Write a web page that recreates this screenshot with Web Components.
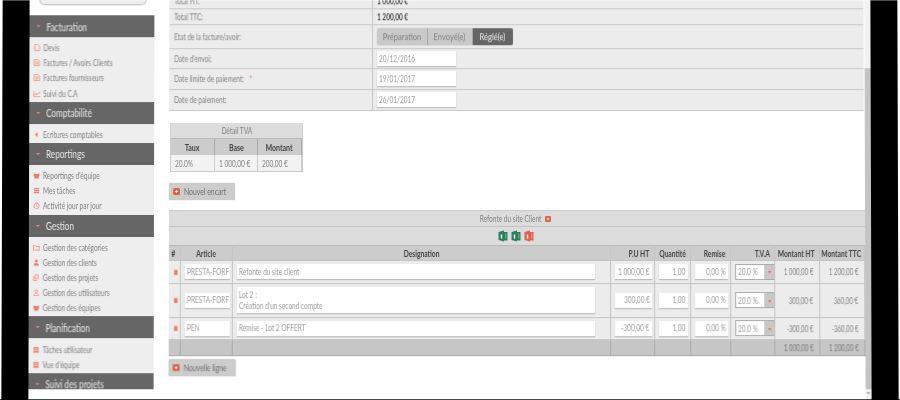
<!DOCTYPE html>
<html lang="fr"><head><meta charset="utf-8"><title>Facture</title>
<style>
html,body{margin:0;padding:0;width:900px;height:400px;overflow:hidden;background:#fff}
body{font-family:Lato,"Open Sans","Liberation Sans",sans-serif;font-size:8.800px;color:#808080}
</style></head><body>
<app-frame>
  <side-bar slot="side">
    <side-section label="Facturation">
      <side-item icon="doc">Devis</side-item>
      <side-item icon="file">Factures / Avoirs Clients</side-item>
      <side-item icon="file">Factures fournisseurs</side-item>
      <side-item icon="chart">Suivi du C.A</side-item>
    </side-section>
    <side-section label="Comptabilité">
      <side-item icon="back">Ecritures comptables</side-item>
    </side-section>
    <side-section label="Reportings">
      <side-item icon="team">Reportings d'équipe</side-item>
      <side-item icon="list">Mes tâches</side-item>
      <side-item icon="clock">Activité jour par jour</side-item>
    </side-section>
    <side-section label="Gestion">
      <side-item icon="folder">Gestion des catégories</side-item>
      <side-item icon="user">Gestion des clients</side-item>
      <side-item icon="copy">Gestion des projets</side-item>
      <side-item icon="userline">Gestion des utilisateurs</side-item>
      <side-item icon="team">Gestion des équipes</side-item>
    </side-section>
    <side-section label="Planification">
      <side-item icon="cal">Tâches utilisateur</side-item>
      <side-item icon="cal">Vue d'équipe</side-item>
    </side-section>
    <side-section label="Suivi des projets"></side-section>
  </side-bar>
  <invoice-form></invoice-form>
  <tva-table></tva-table>
  <add-button style="margin:11px 0 0 .5px;width:66px">Nouvel encart</add-button>
  <lines-table></lines-table>
  <add-button style="margin:3px 0 0 0;width:67px">Nouvelle ligne</add-button>
</app-frame>
<script>
const T=`.t{display:inline-block;white-space:nowrap;transform:scaleX(var(--sx,.74));transform-origin:left center}
.t.m{transform-origin:center}.t.e{transform-origin:right center}.t.p{white-space:pre-line}`;
const t=(s,c='')=>`<span class="t ${c}">${s}</span>`;
const ICONS={
 doc:'<path d="M1.500.5h3.500l2 2v5h-5.500z" fill="none" stroke="currentColor" stroke-width=".8"/>',
 file:'<path d="M1 .5h4l2 2v5H1z" fill="none" stroke="currentColor" stroke-width=".8"/><path d="M2.500 3.500h3M2.500 5.500h3" stroke="currentColor" stroke-width=".9"/>',
 chart:'<path d="M.5 1v6.500H8" fill="none" stroke="currentColor" stroke-width=".7"/><path d="M1 6l2-2 1.500 1L8 2" fill="none" stroke="currentColor"/>',
 back:'<path d="M5 1L2 4l3 3z" fill="currentColor"/>',
 team:'<path d="M1 1.500l1.500.8h3L7 1.500 7.500 4 6.500 5v2.500h-5V5L.5 4z" fill="currentColor"/>',
 list:'<path d="M1 1h6v1.500H1zM1 3.300h6v1.500H1zM1 5.600h6V7H1z" fill="currentColor"/>',
 clock:'<circle cx="4" cy="4.500" r="3" fill="none" stroke="currentColor" stroke-width=".8"/><path d="M4 3v1.700h1.500M3 .6h2" stroke="currentColor" stroke-width=".7" fill="none"/>',
 folder:'<path d="M.5 2h2.500l.7.800h3.800v4.200H.5z" fill="none" stroke="currentColor" stroke-width=".8"/>',
 user:'<circle cx="4" cy="2.200" r="1.700" fill="currentColor"/><path d="M1 7.500c0-4 6-4 6 0z" fill="currentColor"/>',
 copy:'<path d="M2.500 1H6v4.500H2.500zM1 2.500v5h4" fill="none" stroke="currentColor" stroke-width=".8"/>',
 userline:'<circle cx="4" cy="2.400" r="1.600" fill="none" stroke="currentColor" stroke-width=".7"/><path d="M1.300 7.500c0-3.500 5.400-3.500 5.400 0z" fill="none" stroke="currentColor" stroke-width=".7"/>',
 cal:'<path d="M1 1.200h6v6.300H1z" fill="currentColor"/><path d="M1.700 3.200h4.600M1.700 5h4.600" stroke="#fff" stroke-width=".7"/>',
 trash:'<path d="M2 2h4v5.500H2zM1.500 1.200h5" fill="currentColor" stroke="currentColor" stroke-width=".6"/>'
};
const svgIcon=(n,s=8)=>`<svg width="${s}" height="${s}" viewBox="0 0 8 8" aria-hidden="true">${ICONS[n]}</svg>`;
function define(name,css,html){
  customElements.define(name,class extends HTMLElement{
    connectedCallback(){
      if(this.shadowRoot)return;
      this.attachShadow({mode:'open'}).innerHTML=`<style>${T}${css}</style>`+(typeof html==='function'?html(this):html);
    }
  });
}
define('app-frame',`
:host{display:block;width:900px;height:400px;background:#fff;transform:perspective(1000px) rotateX(.42deg);filter:blur(.48px)}
.frame{box-sizing:border-box;height:398.500px;margin:0 2px;background:#fff;border:solid #000;border-width:0 27px;display:flex;overflow:hidden}
.side{width:125px;flex:none}
main{width:696px;flex:none;margin-left:14.500px;display:flex;flex-direction:column;align-items:flex-start}
.bar{width:6.500px;margin-left:.500px;flex:none;background:#f1f1f1;display:flex;flex-direction:column;padding-top:68px}
.thumb{height:321px;background:#c4c4c4;flex:none}
.arrow{margin:3px auto 0;width:0;height:0;border:2px solid transparent;border-top-color:#999}
.foot{height:1.500px;background:#000}`,
`<div class="frame"><div class="side"><slot name="side"></slot></div><main><slot></slot></main><div class="bar"><div class="thumb"></div><div class="arrow"></div></div></div><div class="foot"></div>`);
define('side-bar',`
:host{display:block;height:389px;overflow:hidden}
.top{box-sizing:border-box;height:4.500px;margin:0 8px 10.500px 10px;background:#eee;border:1px solid #bbb;border-top:0;border-radius:0 0 8px 8px}
.list{background:#eeeeee}`,
`<div class="top"></div><div class="list"><slot></slot></div>`);
define('side-section',`
:host{display:block}
header{height:22px;box-sizing:border-box;background:#666;color:#e8e8e8;font-size:12px;display:flex;align-items:center;padding-left:7px;gap:6px;white-space:nowrap;--sx:.68}
header i{width:0;height:0;border:2px solid transparent;border-top-color:#ec8a75;margin-top:2px}
.b{padding:3px 0 1px}`,
h=>`<header><i></i>${t(h.getAttribute('label'))}</header><div class="b"><slot></slot></div>`);
define('side-item',`
:host{display:flex;align-items:center;height:15.200px;padding-left:4px;font-size:8.800px;color:#808080;white-space:nowrap}
.i{display:flex;color:#ee7b63;margin-right:3px}`,
h=>`<span class="i">${svgIcon(h.getAttribute('icon'),7)}</span><span class="t"><slot></slot></span>`);
define('invoice-form',`
:host{display:block;width:695px;margin:-7px 0 0 .500px;background:#ececec;color:#808080;font-size:8.800px;flex:none}
.r{display:grid;grid-template-columns:203px 1fr;box-sizing:border-box;border-bottom:1px solid #c8c8c8}
.r>div{display:flex;align-items:center;padding-left:5px;white-space:nowrap}
.r>div+div{border-left:1px solid #c4c4c4;padding-left:4px}
b{color:#444;font-weight:700}
u{color:#e8705a;text-decoration:none;margin-left:5px}
.inp{box-sizing:border-box;width:79px;height:15px;background:#fff;box-shadow:0 1px 1px #bbb;padding-left:2px;display:flex;align-items:center;color:#999}
.seg{display:flex;height:17px;font-size:10.200px;border-radius:2px;overflow:hidden;box-shadow:0 0 1px #888}
.seg>span{background:#c9c9c9;display:flex;align-items:center;justify-content:center;border-right:1px solid #aaa;box-sizing:border-box}
.seg .on{background:#666;color:#eee;border:0}`,
`<div class="r" style="height:16px"><div>${t('Total HT:')}</div><div>${t('<b>1 000,00 €</b>')}</div></div>
<div class="r" style="height:15.500px"><div>${t('Total TTC:')}</div><div>${t('<b>1 200,00 €</b>')}</div></div>
<div class="r" style="height:24px"><div>${t('Etat de la facture/avoir:')}</div><div><div class="seg"><span style="width:51px">${t('Préparation','m')}</span><span style="width:44.500px">${t('Envoyé(e)','m')}</span><span class="on" style="width:40.500px">${t('Réglé(e)','m')}</span></div></div></div>
<div class="r" style="height:20.500px"><div>${t("Date d'envoi:")}</div><div><div class="inp">${t('20/12/2016')}</div></div></div>
<div class="r" style="height:20.500px"><div>${t('Date limite de paiement: <u>*</u>')}</div><div><div class="inp">${t('19/01/2017')}</div></div></div>
<div class="r" style="height:21px"><div>${t('Date de paiement:')}</div><div><div class="inp">${t('26/01/2017')}</div></div></div>`);
define('tva-table',`
:host{display:grid;grid-template-columns:44px 43px 44px;width:131px;margin:12.500px 0 0 1.500px;font-size:8.800px;color:#808080;border:solid #ccc;border-width:0 1px 1px 1px;flex:none}
div{display:flex;align-items:center;height:16px;box-sizing:border-box;justify-content:center;white-space:nowrap}
.t0{grid-column:1/4;background:#dcdcdc;border-bottom:1px solid #bbb}
.h{background:#ccc;color:#444;font-weight:700;border-right:1px solid #aaa;--sx:.8}
.c{background:#f2f2f2;justify-content:flex-start;padding-left:4px;border-right:1px solid #ccc}`,
`<div class="t0">${t('Détail TVA','m')}</div><div class="h">${t('Taux','m')}</div><div class="h">${t('Base','m')}</div><div class="h">${t('Montant','m')}</div><div class="c">${t('20.0%')}</div><div class="c">${t('1 000,00 €')}</div><div class="c">${t('200,00 €')}</div>`);
define('add-button',`
:host{display:flex;align-items:center;box-sizing:border-box;height:17px;padding:0 0 0 4px;background:#ccc;border-radius:2px;box-shadow:0 0 1px #999;font-size:9.500px;color:#707070;gap:4px;flex:none;white-space:nowrap;--sx:.72}
svg{display:block;flex:none}`,
`<svg width="7" height="7" viewBox="0 0 7 7" aria-hidden="true"><rect width="7" height="7" rx="1.500" fill="#e8603f"/><path d="M2 3.500h3M3.500 2v3" stroke="#fff" stroke-width="1"/></svg><span class="t"><slot></slot></span>`);
define('tva-select',`
:host{display:flex;box-sizing:border-box;width:39px;height:16px;border:1px solid #aaa;background:#fff;font-size:8.800px;align-items:center;padding-left:2px;justify-content:space-between;color:#999}
i{width:10px;height:100%;background:#c8c8c8;display:flex;align-items:center;justify-content:center;font-style:normal;color:#e8705a;font-size:6px;flex:none}`,
`<span class="t"><slot></slot></span><i>▾</i>`);
define('lines-table',`
:host{display:block;width:696px;margin-top:10px;flex:none;font-size:8.800px;color:#808080}
.tt{display:flex;align-items:center;justify-content:center;background:#dcdcdc;border-top:1px solid #ccc;border-bottom:1px solid #c4c4c4;box-sizing:border-box}
.tt svg{margin:0 1.500px}
.grid{display:grid;grid-template-columns:12px 52.500px 377.500px 44px 36px 40px 44px 45px 45px}
.grid>div{box-sizing:border-box;display:flex;align-items:center;border-right:1px solid #c4c4c4;border-bottom:1px solid #c4c4c4;background:#ececec;white-space:nowrap;overflow:hidden}
.grid>.h{height:16px;background:#ccc;color:#444;font-weight:700;justify-content:center;border-top:1px solid #bbb;--sx:.76}
.grid>.h.r{justify-content:flex-end;padding-right:4px}
.grid>.rv{justify-content:flex-end;padding-right:5.500px;--sx:.7}
.grid>.f{height:16.500px;background:#c6c6c6;border-color:#aaa;color:#777}
.grid>.ic{justify-content:flex-end;padding-right:1px;color:#ee7b63}
.grid>.c{padding-left:4px;padding-right:2px}
.inp{box-sizing:border-box;background:#fff;box-shadow:0 1px 1px #bbb;height:15px;display:flex;align-items:center;padding:0 2px;width:100%;line-height:11.500px;color:#999;white-space:nowrap}
.num{justify-content:flex-end}`,
()=>{
 const hd=['#','Article','Designation','P.U HT','Quantité','Remise','T.V.A','Montant HT','Montant TTC'];
 const al=['m','m','m','e','m','e','e','m','m'];
 const rows=[
  {h:22.500,a:'PRESTA-FORF',d:'Refonte du site client',p:'1 000,00 €',m:'1 000,00 €',v:'1 200,00 €'},
  {h:34,dh:26,a:'PRESTA-FORF',d:"Lot 2 :\nCréation d'un second compte",p:'300,00 €',m:'300,00 €',v:'360,00 €'},
  {h:22,a:'PEN',d:'Remise - Lot 2 OFFERT',p:'-300,00 €',m:'-300,00 €',v:'-360,00 €'}];
 let g=hd.map((x,i)=>`<div class="h ${al[i]==='e'?'r':''}">${t(x,al[i])}</div>`).join('');
 for(const r of rows){
  const s=`height:${r.h}px`;
  g+=`<div class="ic" style="${s}">${svgIcon('trash',6)}</div>
  <div class="c" style="${s}"><div class="inp">${t(r.a)}</div></div>
  <div class="c" style="${s};padding-right:15px"><div class="inp" style="height:${r.dh||15}px">${t(r.d,'p')}</div></div>
  <div class="c" style="${s}"><div class="inp num">${t(r.p,'e')}</div></div>
  <div class="c" style="${s}"><div class="inp num">${t('1,00','e')}</div></div>
  <div class="c" style="${s}"><div class="inp num">${t('0,00 %','e')}</div></div>
  <div class="c" style="${s}"><tva-select>20.0 %</tva-select></div>
  <div class="rv" style="${s}">${t(r.m,'e')}</div><div class="rv" style="${s}">${t(r.v,'e')}</div>`;
 }
 g+=`<div class="f"></div><div class="f"></div><div class="f"></div><div class="f"></div><div class="f"></div><div class="f"></div><div class="f"></div><div class="f rv">${t('1 000,00 €','e')}</div><div class="f rv">${t('1 200,00 €','e')}</div>`;
 const book=c=>`<svg width="10" height="12" viewBox="0 0 10 12" aria-hidden="true"><path d="M.5 2L6 .5V2h3.500v8.500H6V11.500L.5 10z" fill="${c}"/><path d="M3.500 4.500v4" stroke="#fff" stroke-width="1.400"/><path d="M7.800 3.500v5" stroke="#fff" stroke-width=".6" opacity=".7"/></svg>`;
 return `<div class="tt" style="height:17px;padding-right:23px">${t('Refonte du site Client','e')}<svg style="margin:0 1px 0 4px" width="6" height="6" viewBox="0 0 7 7" aria-hidden="true"><rect width="7" height="7" rx="1.500" fill="#e8603f"/><path d="M2 3.500h3M3.500 2v3" stroke="#fff"/></svg></div>
 <div class="tt" style="height:18px;border-top:0;border-bottom:0;padding-right:2px">${book('#2a8058')}${book('#2a8058')}${book('#e0604a')}</div>
 <div class="grid">${g}</div>`;
});
</script>
</body></html>
